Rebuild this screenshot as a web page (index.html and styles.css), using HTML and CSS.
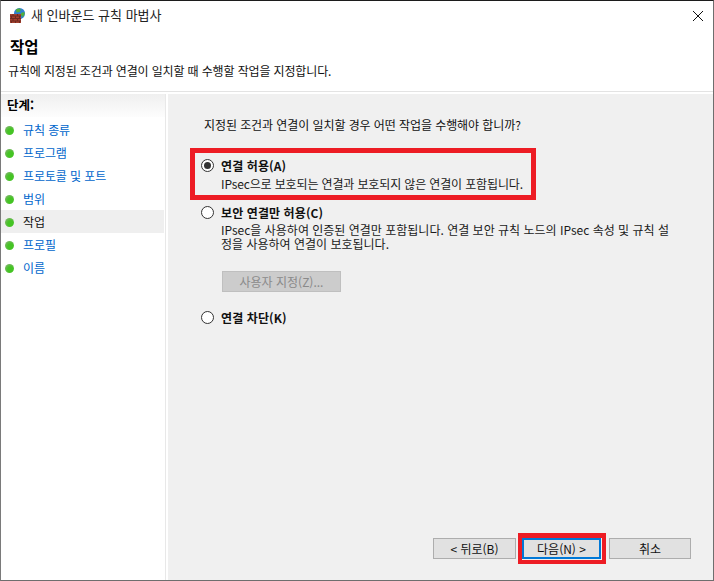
FILE: index.html
```html
<!DOCTYPE html>
<html lang="ko">
<head>
<meta charset="utf-8">
<title>새 인바운드 규칙 마법사</title>
<link rel="stylesheet" href="styles.css">
</head>
<body>
<div class="window">
  <div class="titlebar">
    <svg class="app-icon" width="16" height="16" viewBox="0 0 16 16">
      <circle cx="9.500" cy="5.500" r="5.500" fill="#2f7fd0"/>
      <path d="M6 1.500c2-1.500 4-1.500 5 0l-1.500 2.500-3 .5zM11 5l3.500-1c.5 2-.5 4-2 5l-1.500-2z" fill="#4fae3c"/>
      <rect x="0" y="6" width="11" height="9" fill="#a5402e"/>
      <path d="M0 8h11M0 10.500h11M0 13h11M3 6v2M7.500 6v2M1.500 8v2.500M5.500 8v2.500M9.500 8v2.500M3 10.500V13M7.500 10.500V13M1.500 13v2M5.500 13v2M9.500 13v2" stroke="#6f2a20" stroke-width="1" fill="none"/>
    </svg>
    <span class="title-text">새 인바운드 규칙 마법사</span>
    <svg class="close-icon" width="10" height="10" viewBox="0 0 10 10">
      <path d="M0 0L10 10M10 0L0 10" stroke="#111" stroke-width="1" fill="none"/>
    </svg>
  </div>
  <div class="header">
    <h1 class="page-title">작업</h1>
    <p class="page-desc">규칙에 지정된 조건과 연결이 일치할 때 수행할 작업을 지정합니다.</p>
  </div>
  <div class="body">
    <nav class="sidebar">
      <div class="side-head">단계:</div>
      <ul class="steps">
        <li class="step"><span class="dot"></span><span class="step-link">규칙 종류</span></li>
        <li class="step"><span class="dot"></span><span class="step-link">프로그램</span></li>
        <li class="step"><span class="dot"></span><span class="step-link">프로토콜 및 포트</span></li>
        <li class="step"><span class="dot"></span><span class="step-link">범위</span></li>
        <li class="step current"><span class="dot"></span><span class="step-link">작업</span></li>
        <li class="step"><span class="dot"></span><span class="step-link">프로필</span></li>
        <li class="step"><span class="dot"></span><span class="step-link">이름</span></li>
      </ul>
    </nav>
    <main class="content">
      <p class="question">지정된 조건과 연결이 일치할 경우 어떤 작업을 수행해야 합니까?</p>
      <div class="options">
        <div class="option first">
          <div class="radio-row"><span class="radio checked"></span><span class="radio-label">연결 허용(A)</span></div>
          <p class="option-desc">IPsec으로 보호되는 연결과 보호되지 않은 연결이 포함됩니다.</p>
        </div>
        <div class="option second">
          <div class="radio-row"><span class="radio"></span><span class="radio-label">보안 연결만 허용(C)</span></div>
          <p class="option-desc wide">IPsec을 사용하여 인증된 연결만 포함됩니다. 연결 보안 규칙 노드의 IPsec 속성 및 규칙 설정을 사용하여 연결이 보호됩니다.</p>
          <div class="custom-btn">사용자 지정(Z)...</div>
        </div>
        <div class="option third">
          <div class="radio-row"><span class="radio"></span><span class="radio-label">연결 차단(K)</span></div>
        </div>
      </div>
      <div class="footer">
        <div class="btn back">&lt; 뒤로(B)</div>
        <div class="btn next">다음(N) &gt;</div>
        <div class="btn cancel">취소</div>
      </div>
    </main>
  </div>
</div>
<div class="mark mark-option"></div>
<div class="mark mark-next"></div>
</body>
</html>
```
FILE: styles.css
```css
* { box-sizing: border-box; }
html, body { margin: 0; padding: 0; }
body {
  width: 714px;
  height: 581px;
  position: relative;
  overflow: hidden;
  font-family: "Noto Sans CJK KR", "Noto Sans", sans-serif;
  font-size: 12px;
  color: #111;
  background: #fff;
}
p, h1, ul { margin: 0; padding: 0; }
ul { list-style: none; }
.window {
  width: 714px;
  height: 581px;
  display: flex;
  flex-direction: column;
  border-top: 1px solid #1c1c1c;
  border-left: 1px solid #7a7a7a;
  border-right: 1px solid #6e6e6e;
  border-bottom: 1px solid #6e6e6e;
}
.titlebar {
  height: 29px;
  display: flex;
  align-items: center;
  padding: 0 0 0 9px;
  background: #fff;
}
.app-icon { flex: none; margin-right: 5px; }
.title-text { flex: 1; font-size: 13px; color: #222; margin-top: -2px; }
.close-icon { flex: none; margin-right: 10px; }
.header {
  height: 62px;
  background: #fff;
  border-bottom: 1px solid #e3e3e3;
  padding: 6px 0 0 9px;
}
.page-title { font-size: 15.500px; font-weight: 700; line-height: 20px; color: #000; }
.page-desc { margin-top: 6px; margin-left: -2px; line-height: 18px; letter-spacing: -0.14px; }
.body {
  flex: 1;
  display: flex;
  background: #fff;
  padding-top: 2px;
  min-height: 0;
}
.sidebar {
  width: 165px;
  margin-right: 2px;
  flex: none;
  background: #fff;
  border-right: 1px solid #e8e8e8;
}
.side-head {
  height: 23px;
  line-height: 21px;
  padding-left: 6px;
  font-weight: 700;
  font-size: 12.500px;
  background: linear-gradient(#efefef, #fdfdfd);
  color: #000;
}
.steps { padding-top: 1px; }
.step {
  height: 23px;
  display: flex;
  align-items: center;
  padding-left: 4px;
}
.step.current { background: #efefef; margin-right: 1px; }
.dot {
  width: 9px;
  height: 9px;
  border-radius: 50%;
  margin-right: 9px;
  margin-top: 2px;
  background: radial-gradient(circle at 62% 62%, #45c424 0 35%, #72b85c 70%, #b9cdb2 100%);
}
.step-link { color: #0066cc; letter-spacing: -0.1px; }
.current .step-link { color: #111; }
.content {
  flex: 1;
  display: flex;
  flex-direction: column;
  min-width: 0;
  background: #f0f0f0;
}
.question { margin: 22px 0 0 36px; line-height: 18px; letter-spacing: -0.08px; }
.options { flex: 1; padding: 0 0 0 33px; }
.first { margin-top: 22px; }
.second { margin-top: 11px; }
.third { margin-top: 16px; }
.radio-row { display: flex; align-items: center; height: 18px; font-weight: 700; letter-spacing: 0.1px; }
.radio {
  width: 13px;
  height: 13px;
  border: 1px solid #333;
  border-radius: 50%;
  background: #fff;
  margin-right: 7px;
  position: relative;
  flex: none;
}
.radio.checked::after {
  content: "";
  position: absolute;
  left: 2px;
  top: 2px;
  width: 7px;
  height: 7px;
  border-radius: 50%;
  background: #333;
}
.option-desc { margin: 2px 0 0 20px; line-height: 16px; color: #1a1a1a; letter-spacing: -0.14px; }
.option-desc.wide { width: 456px; margin-top: 2px; line-height: 14px; letter-spacing: 0; }
.custom-btn {
  margin: 20px 0 0 21px;
  width: 119px;
  height: 21px;
  line-height: 19px;
  background: #cccccc;
  border: 1px solid #bfbfbf;
  color: #8a8a8a;
  text-align: center;
}
.footer {
  height: 64px;
  display: flex;
  padding: 22px 0 0 265px;
}
.btn {
  height: 21px;
  line-height: 19px;
  background: #e1e1e1;
  border: 1px solid #adadad;
  text-align: center;
  color: #111;
  flex: none;
}
.back { width: 83px; margin-right: 6px; }
.next { width: 79px; margin-right: 8px; border: 2px solid #0078d7; line-height: 17px; }
.cancel { width: 82px; }
.mark {
  position: absolute;
  border: 5px solid #ed1c24;
  pointer-events: none;
}
.mark-option { left: 190px; top: 148px; width: 346px; height: 52px; }
.mark-next { left: 518px; top: 533px; width: 88px; height: 31px; border-width: 5px 4px 4px; }
```
